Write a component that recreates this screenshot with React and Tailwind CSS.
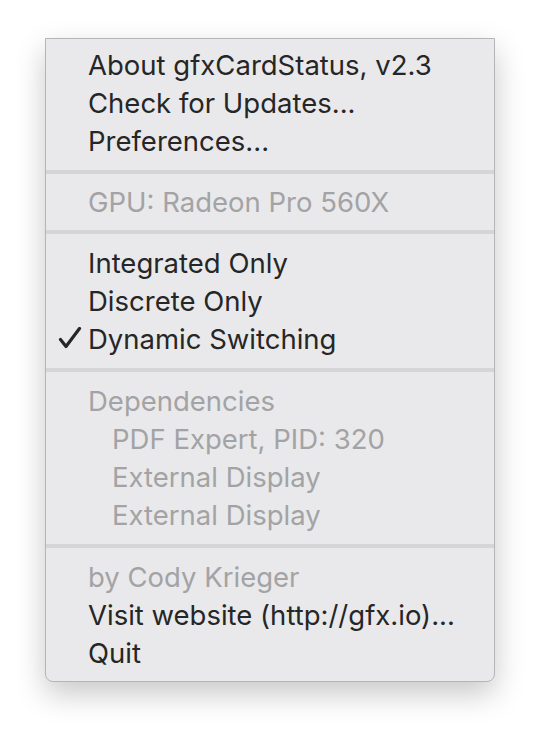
import React from "react";

const Item = ({ children, disabled, indent, checked }) => (
  <div
    className={`relative h-[38px] flex items-center whitespace-nowrap ${indent ? "pl-[66px]" : "pl-[42px]"} ${disabled ? "text-[#a3a3a5]" : "text-[#262626]"}`}
  >
    {checked && (
      <svg className="absolute left-[12px] top-[7px]" width="24" height="24" viewBox="0 0 24 24">
        <path d="M2.5 12.5 L8 19.5 L21.5 1.5" fill="none" stroke="#262626" strokeWidth="3.2" strokeLinecap="round" strokeLinejoin="round" />
      </svg>
    )}
    {children}
  </div>
);

const Sep = () => <div className="h-[4px] bg-[#d5d5d7]" />;

export default function App() {
  return (
    <div className="w-[540px] h-[736px] bg-white relative" style={{ fontFamily: "Inter, 'Noto Sans', sans-serif" }}>
      <div className="absolute left-[45px] top-[38px] w-[450px] bg-[#e9e9eb] border border-[#b5b5b7] rounded-b-[8px] shadow-[0_12px_30px_rgba(0,0,0,0.22)] text-[27.5px] leading-[38px]">
        <div className="pt-[7px] pb-[10px]">
          <Item>About gfxCardStatus, v2.3</Item>
          <Item>Check for Updates...</Item>
          <Item>Preferences...</Item>
        </div>
        <Sep />
        <div className="py-[9px]">
          <Item disabled>GPU: Radeon Pro 560X</Item>
        </div>
        <Sep />
        <div className="py-[10px]">
          <Item>Integrated Only</Item>
          <Item>Discrete Only</Item>
          <Item checked>Dynamic Switching</Item>
        </div>
        <Sep />
        <div className="py-[10px]">
          <Item disabled>Dependencies</Item>
          <Item disabled indent>PDF Expert, PID: 320</Item>
          <Item disabled indent>External Display</Item>
          <Item disabled indent>External Display</Item>
        </div>
        <Sep />
        <div className="pt-[10px] pb-[9px]">
          <Item disabled>by Cody Krieger</Item>
          <Item>Visit website (http://gfx.io)...</Item>
          <Item>Quit</Item>
        </div>
      </div>
    </div>
  );
}
